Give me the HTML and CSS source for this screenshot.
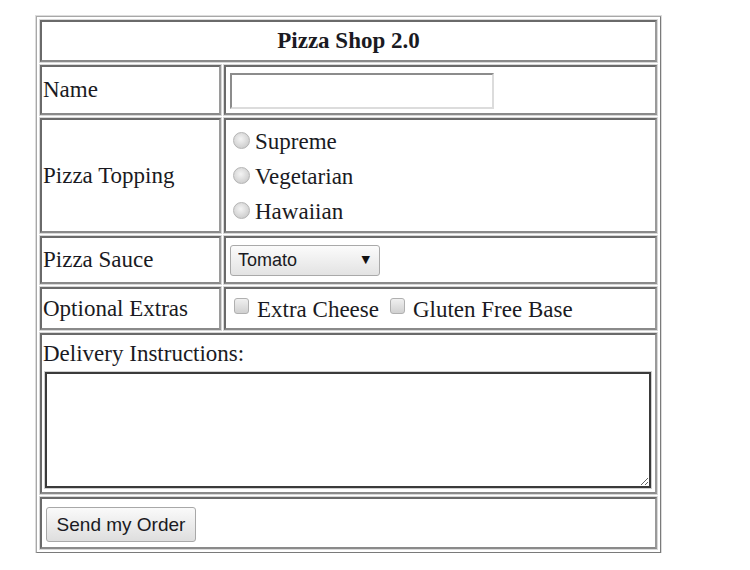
FILE: index.html
```html
<!DOCTYPE html>
<html>
<head>
<meta charset="utf-8">
<link rel="stylesheet" href="styles.css">
</head>
<body>
<form class="order">
<table class="shop">
  <tr class="row-head"><th colspan="2" class="title">Pizza Shop 2.0</th></tr>
  <tr class="row-name">
    <td class="label">Name</td>
    <td class="field"><input type="text" class="text-input"></td>
  </tr>
  <tr class="row-topping">
    <td class="label">Pizza Topping</td>
    <td class="field">
      <div class="opt"><input type="radio" name="top" class="radio"><span>Supreme</span></div>
      <div class="opt"><input type="radio" name="top" class="radio"><span>Vegetarian</span></div>
      <div class="opt"><input type="radio" name="top" class="radio"><span>Hawaiian</span></div>
    </td>
  </tr>
  <tr class="row-sauce">
    <td class="label">Pizza Sauce</td>
    <td class="field"><span class="select-wrap"><select class="select"><option>Tomato</option><option>BBQ</option></select></span></td>
  </tr>
  <tr class="row-extras">
    <td class="label">Optional Extras</td>
    <td class="field"><input type="checkbox" class="check"><span class="check-text">Extra Cheese</span><input type="checkbox" class="check check-second"><span class="check-text">Gluten Free Base</span></td>
  </tr>
  <tr class="row-delivery">
    <td colspan="2" class="delivery">
      <div class="delivery-label">Delivery Instructions:</div>
      <textarea class="notes"></textarea>
    </td>
  </tr>
  <tr class="row-button">
    <td colspan="2" class="submit-cell"><button type="button" class="send">Send my Order</button></td>
  </tr>
</table>
</form>
</body>
</html>
```
FILE: styles.css
```css
html, body {
  margin: 0;
  padding: 0;
  background: #ffffff;
}
body {
  font-family: "Liberation Serif", "Times New Roman", serif;
  font-size: 23px;
  color: #1a1a22;
}
.order {
  padding: 16px 0 0 36px;
}
.shop {
  width: 625px;
  border-collapse: separate;
  border-spacing: 3px;
  border: 1px solid;
  border-color: #a8a8a8 #7a7a7a #7a7a7a #a8a8a8;
  box-shadow: 0 0 0 1px #dcdcdc;
}
.shop th, .shop td {
  border: 2px solid;
  border-color: #6a6a6a #9a9a9a #8a8a8a #6a6a6a;
  box-shadow: 0 0 0 1px #d8d8d8;
  padding: 0 1px;
}
.title {
  height: 38px;
  font-weight: bold;
  text-align: center;
  font-size: 23px;
}
.label {
  width: 175px;
  text-align: left;
  vertical-align: middle;
}
.row-name td { height: 46px; }
.row-topping .field { padding-top: 4px; padding-bottom: 2px; }
.row-sauce td { height: 44px; }
.row-extras td { height: 39px; }
.field {
  padding-left: 3px;
  vertical-align: middle;
}
.text-input {
  box-sizing: border-box;
  width: 264px;
  height: 36px;
  margin: 2px 0 0 3px;
  vertical-align: middle;
  border: 2px solid;
  border-color: #8c8c8c #dcdcdc #dcdcdc #8c8c8c;
  background: #fff;
}
.opt {
  height: 35px;
  display: flex;
  align-items: center;
}
.radio {
  appearance: none;
  width: 17px;
  height: 17px;
  margin: 0 5px 3px 6px;
  border-radius: 50%;
  border: 1px solid #b4b4b4;
  background: radial-gradient(circle at 45% 40%, #f4f4f4 0%, #d6d6d6 60%, #c2c2c2 100%);
}
.select-wrap {
  position: relative;
  display: inline-block;
  margin-left: 3px;
}
.select-wrap::after {
  content: "\25BC";
  position: absolute;
  right: 10px;
  top: 8px;
  font-family: "DejaVu Sans", sans-serif;
  font-size: 11px;
  color: #111;
  pointer-events: none;
}
.select {
  appearance: none;
  box-sizing: border-box;
  width: 150px;
  height: 31px;
  padding: 0 0 0 7px;
  border: 1px solid #a9a9a9;
  border-radius: 3px;
  background: linear-gradient(#fbfbfb, #e3e3e3);
  font-family: "Liberation Sans", Arial, sans-serif;
  font-size: 18px;
  color: #1a1a22;
  vertical-align: middle;
}
.check {
  appearance: none;
  width: 15px;
  height: 16px;
  margin: 0 8px 6px 7px;
  vertical-align: middle;
  border: 1px solid #b0b0b0;
  border-radius: 3px;
  background: linear-gradient(#f0f0f0, #d0d0d0);
}
.check-second {
  margin-left: 11px;
}
.check-text {
  vertical-align: middle;
}
.delivery {
  height: 157px;
  vertical-align: top;
}
.delivery-label {
  height: 36px;
  line-height: 38px;
}
.notes {
  display: block;
  box-sizing: border-box;
  width: 606px;
  height: 116px;
  margin: 1px 0 0 2px;
  border: 2px solid #3a3a3a;
  box-shadow: 0 0 0 1px #cfcfcf;
  background: #fff;
  resize: both;
}
.submit-cell {
  height: 48px;
  vertical-align: middle;
}
.send {
  box-sizing: border-box;
  width: 150px;
  height: 35px;
  margin: 3px 0 0 3px;
  border: 1px solid #a8a8a8;
  border-radius: 3px;
  background: linear-gradient(#fafafa, #dedede);
  font-family: "Liberation Sans", Arial, sans-serif;
  font-size: 19px;
  color: #1a1a22;
  padding: 0;
}
```
